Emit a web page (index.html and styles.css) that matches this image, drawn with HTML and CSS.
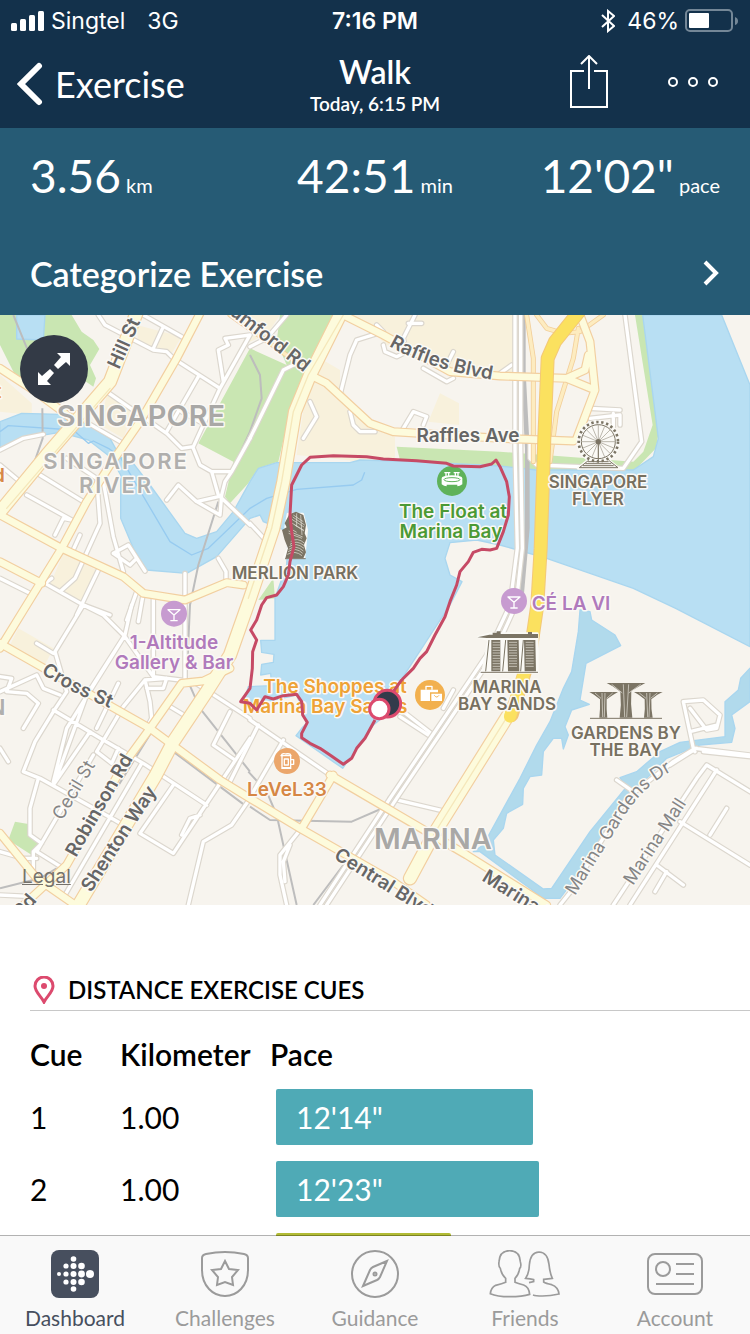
FILE: index.html
```html
<!DOCTYPE html>
<html lang="en">
<head>
  <meta charset="UTF-8">
  <meta name="viewport" content="width=device-width, initial-scale=1.0">
  <title>Walk</title>
  <link rel="stylesheet" href="styles.css">
</head>
<body>
  <header class="top">
    <div class="status">
      <div class="status-left">
        <svg class="signal" viewBox="0 0 34 20"><rect x="0" y="12" width="6" height="8" rx="1.5"/><rect x="9" y="8" width="6" height="12" rx="1.5"/><rect x="18" y="4" width="6" height="16" rx="1.5"/><rect x="27" y="0" width="6" height="20" rx="1.5"/></svg>
        <span>Singtel</span>
        <span class="network">3G</span>
      </div>
      <span class="time">7:16 PM</span>
      <div class="status-right">
        <svg class="bluetooth" viewBox="0 0 14 24"><path d="M1 6l12 11-6 5V2l6 5L1 18"/></svg>
        <span>46%</span>
        <svg class="battery" viewBox="0 0 54 24"><rect x="1" y="1" width="46" height="21" rx="4" class="shell"/><path d="M50 8q3 1 3 4t-3 4z" class="cap"/><rect x="4" y="4" width="20" height="15" rx="1" class="level"/></svg>
      </div>
    </div>
    <div class="nav">
      <button class="back">
        <svg viewBox="0 0 26 44"><path d="M22 4L4 22l18 18"/></svg>
        <span>Exercise</span>
      </button>
      <div class="title">
        <h1>Walk</h1>
        <p>Today, 6:15 PM</p>
      </div>
      <div class="actions">
        <button aria-label="Share">
          <svg class="share" viewBox="0 0 40 54"><path d="M15 16H2v36h36V16H25M20 34V2M12 9l8-8 8 8"/></svg>
        </button>
        <button aria-label="More">
          <svg class="more" viewBox="0 0 52 12"><circle cx="6" cy="6" r="4"/><circle cx="26" cy="6" r="4"/><circle cx="46" cy="6" r="4"/></svg>
        </button>
      </div>
    </div>
  </header>

  <main>
    <section class="summary">
      <div class="stats">
        <p><strong>3.56</strong> km</p>
        <p><strong>42:51</strong> min</p>
        <p><strong>12'02"</strong> pace</p>
      </div>
      <button class="categorize">
        <span>Categorize Exercise</span>
        <svg viewBox="0 0 18 28"><path d="M3 3l11 11L3 25"/></svg>
      </button>
    </section>

    <section class="map">
      <svg class="map-canvas" viewBox="0 0 750 590">
        <defs>
          <!-- small streets -->
          <g id="streets">
            <path d="M295 0L315 30 460 105 500 110 520 130 660 220 750 60M490 35L460 100M430 0L545 65M750 60L675 70 685 90 655 105 670 200M595 185L500 350M320 230L500 355 545 400 580 395 660 220M545 290L600 320M580 400L600 450 635 470 655 540 750 630M635 470H695L750 370M695 470L675 500 665 540 660 600 590 560 535 510 500 555M655 545L590 560"/>
            <path d="M0 405L70 370 130 358M265 325L360 380M80 540L215 615 190 610 165 660M120 480L250 560M200 430L290 490 300 625 225 790 180 830M310 500L340 665 370 770M340 715L385 690 435 768M340 715L390 750 410 730M0 450L60 500M240 660L215 715M0 790L90 835M155 790L135 805 250 870 330 900M295 765L230 900M410 830L380 915M430 835L415 920M460 840V1080M555 775V1090M655 730L678 770V800"/>
            <path d="M250 870L165 1010 200 1130 160 1190 105 1280 70 1370 120 1390 335 1510 370 1530M110 985L160 1015M250 870L310 900 375 965 460 1085 580 1100 750 1210M395 870L375 960 200 1240 160 1400M375 960L260 1140 165 1400M0 1130L110 1080 130 1120 180 1140M0 1085L35 1090 20 1130 80 1135 115 1165 70 1240M160 1185L310 1275 430 1345 620 1470M355 1105L290 1240M500 1090L435 1095 370 1175 290 1310 335 1345 355 1300M435 1095L450 1160 455 1210 440 1240M440 1120L490 1120 500 1090M510 1175L560 1205M270 1250L160 1410M115 1390L90 1480 90 1560 125 1585 100 1610 100 1680M280 1320L110 1610 190 1660M425 1345L195 1740M520 1410L420 1555 520 1615 750 1270M545 1560L570 1510 600 1500M750 1450L695 1530 610 1580 565 1770M690 1190L640 1290 705 1335M0 1300L25 1340M0 1740L100 1745M0 1610L70 1630 110 1630"/>
            <path d="M860 0L800 70 750 95M880 150L850 165 750 370M1020 240L1050 120 1070 75 1150 50 1130 30M1245 0L1210 70 1220 110 1190 125 1155 110 1150 90M1225 25H1265M1360 110L1340 150M1270 160L1340 200 1360 190M930 260L950 305 910 370M1050 290L1060 330 1080 350H1125M1210 340L1240 290 1280 305 1270 330M750 625L810 690"/>
            <path d="M1875 0L1925 380 1870 460 1610 450 1590 430 1590 385M1770 280L1860 285M1770 310L1860 300 1860 330M1840 295V335M1535 150L1500 175M750 1215L990 1380M775 1230L690 1400M850 1275L760 1430M900 1545L840 1620 840 1680 860 1770M870 1590L850 1640 855 1700M1200 1205L1300 1270M1210 1190L1300 1260M1360 1125L1330 1180M1340 1490L1170 1450"/>
            <path d="M2050 1160L2080 1300 2085 1310M2050 1160L2110 1155 2160 1200 2150 1240 2120 1245 2070 1180M2070 1250L2150 1230M2085 1300L2020 1340 1880 1450 1720 1720 1680 1770M2090 1300L2010 1350M1850 1395L1900 1430M2085 1300L2250 1320M2110 1310L2250 1325M2250 1430L2120 1350 2090 1390 1840 1770M2150 1365L1890 1770M2040 1520L2250 1650M2180 1480L2130 1560M1970 1650L2050 1710M2000 1670L1965 1730"/>
          </g>
          <!-- two lane streets beside the rail line -->
          <g id="lanes">
            <path d="M1545 0V400L1552 700 1530 870 1460 1020 1170 1450 960 1770"/>
            <path d="M1562 0V400L1567 700 1548 870 1480 1020 1190 1450 980 1770"/>
          </g>
          <g id="minor">
            <path d="M1580 0L1600 130V440M1735 40L1720 130 1670 290 1650 440M1610 0L1640 40 1690 55 1740 50 1810 0M690 0L930 170M1500 183L1350 165"/>
          </g>
          <g id="major">
            <path d="M0 160L100 225 215 310M600 -5L530 130 420 320 330 450 260 560 185 700 80 870 0 1000M0 600L185 700 370 785 430 835 555 855 680 803 730 810M0 740L125 805"/>
            <path d="M0 985L450 1240 660 1395 750 1450 900 1540 1180 1700 1280 1770M0 1555L110 1690 240 1780M690 1060L610 1098 545 1105 450 1240 370 1350 200 1650 60 1780M990 1380L1400 1620 1640 1770M1000 1380L905 1540"/>
            <path d="M1030 0L1150 60 1350 170 1500 183 1700 190 1785 225 1730 370M1740 0L1770 80 1785 225M1700 190L1755 165 1765 120M930 180L980 205 1110 325 1180 350 1500 370 1720 378"/>
          </g>
          <g id="trunk">
            <path d="M415 -20L330 200 235 310 140 420 0 590"/>
            <path d="M1030 -20L930 180 885 290 850 500 820 640 750 850 690 1020 620 1130 520 1280 465 1385 230 1780"/>
            <path d="M1550 1160L1300 1560 1230 1690"/>
          </g>
          <path id="raffles" d="M389 31Q430 55 500 66"/>
          <path id="cross" d="M41 358Q70 378 120 397"/>
          <path id="gardens" d="M575 581L625 500Q645 470 672 456"/>
        </defs>

        <g transform="scale(.33333)">
          <path class="land" d="M0 0H2250V1770H0z"/>
          <path class="sand" d="M1060 0H1540V170L1400 175 1160 90zM960 130L1020 165V215L1110 330 1185 365V430L1120 443 890 420 920 220zM1320 235L1377 265V330L1285 320zM410 30L545 65 515 115 415 90zM0 180L95 265V300L0 290zM320 240L400 290 370 370 300 330zM190 715L290 765 240 860 150 810zM55 940L160 1000 130 1060 20 1010zM750 0H840L800 60 750 80z"/>
          <path class="park" d="M0 0H215L245 50 280 75 298 102 270 150 288 190 280 215 200 160 100 180 50 190 0 90zM840 0H1000L925 170 870 290 835 440 775 460 745 505 690 565 675 545 700 440 595 385 750 100 860 150 830 80zM1190 395L1500 410 1900 440 1930 410 1958 330 1905 0H1940L1980 330 1968 400 1900 470 1500 460 1200 435zM45 1520L85 1527 88 1565 115 1585 95 1620 25 1575zM820 790L825 850 775 855z"/>
          <path class="water" d="M50 0H135L130 75 50 72zM0 320L65 295 180 298 255 325 330 370 360 425 400 445 450 510 555 655 590 670 650 650 700 590 750 500 775 460 830 443H1050L1080 435 1250 440 1500 453 1610 465H1900L1960 425 1975 370 1960 250 1928 0H2165L2250 210V995L2027 880 1900 820 1640 730 1500 690 1430 675 1350 683 1335 730 1350 780 1386 800 1350 870 1200 1100 1170 1190 1120 1230 1028 1360 888 1262 905 1240 920 1225 905 1180 890 1140 800 1160 765 1185 735 1150 745 1115 815 1112 812 1075 782 1080 785 1048 820 1042 822 1018 785 1012 782 976 825 976V850L860 750 865 650 790 620 780 600 750 610 650 725 560 775 440 765 400 700 362 610V480L330 425 265 375 180 352 70 370 0 410z"/>
          <path class="water canal" d="M1740 885L1770 890 1775 915 1845 960 1862 992 1758 1045 1740 1155 1768 1168 1715 1185 1695 1235 1705 1260 1690 1302 1685 1270 1660 1270 1630 1310 1625 1380 1590 1385 1570 1420 1568 1468 1520 1495 1510 1540 1480 1575 1485 1620 1630 1722 1655 1720 1770 1550 1880 1415 1860 1388 1910 1370 1980 1310 2040 1282 2175 1265V1160L2215 1125 2222 1090 2250 1060V1160L2195 1200 2205 1240 2195 1282 2100 1290 2000 1330 1900 1430 1800 1590 1680 1750H1630L1440 1610 1420 1610 1450 1590 1560 1390 1610 1290 1650 1220 1690 1120 1715 1070 1735 950z"/>
          <path class="current" d="M0 350L25 332 220 345 265 385 280 378 325 400 360 425 510 680 575 720 625 700 750 580 800 550 890 523 1060 510 1085 495 1094 472"/>
          <path class="rail" d="M40 0L85 110M127 280L128 370 100 450M750 350L690 480M655 560L595 750 570 870 560 1090 600 1180 750 1370M480 1210L350 1420M520 1310L740 1475M170 1660L120 1690 0 1720M745 1370L800 1430 830 1500 890 1770M750 1475L810 1515 1055 1520 1170 1470M1030 1650L940 1770M750 120L780 180 785 250 750 350"/>
          <path class="rail wide" d="M1570 0V170L1582 400V640L1562 870"/>

          <use href="#streets" class="street-edge"/>
          <use href="#streets" class="street"/>
          <use href="#lanes" class="street-edge"/>
          <use href="#lanes" class="street"/>
          <use href="#minor" class="minor-edge"/>
          <use href="#minor" class="minor"/>
          <use href="#major" class="major-edge"/>
          <use href="#trunk" class="trunk-edge"/>
          <use href="#major" class="major"/>
          <use href="#trunk" class="trunk"/>
          <path class="median" d="M1030 0L925 180 880 290 845 500 815 640 745 850M1550 1160L1300 1560M330 220L20 580"/>
          <path class="highway-edge" d="M1745 -20L1665 80 1643 130 1633 370 1622 700 1612 870 1590 1020 1535 1200"/>
          <path class="highway" d="M1745 -20L1665 80 1643 130 1633 370 1622 700 1612 870 1590 1020 1530 1205"/>

          <!-- merlion -->
          <g class="landmark">
            <path class="halo" d="M864 597h44l12 48-8 82H852l18-40-13-50z"/>
            <path class="fill" d="M868 598l20-8 22 10 8 30-4 25 6 15-8 20 6 22-8 18h-54l8-30-10-25-8-30 14-8-6-12z"/>
            <path class="hatch" d="M880 600l30 20M874 612l38 24M884 630l28 18M870 640l20 12M866 655l40 15M872 680q20-15 42 5M868 695q20-15 44 5M864 710q24-15 44 5M890 595v40M902 600l4 60M878 606l36 24M872 622l40 24M866 648l42 18M870 688q20-15 44 5M866 703q22-15 44 5M862 718q24-13 44 4"/>
            <path class="line" d="M855 731h62"/>
          </g>
          <!-- flyer -->
          <g class="landmark">
            <circle class="halo-ring" cx="1795" cy="380" r="58"/>
            <path class="halo" d="M1768 432h54l34 28h-122z"/>
            <circle class="cabins" cx="1795" cy="380" r="59"/>
            <circle class="line" cx="1795" cy="380" r="51"/>
            <path class="spokes" d="M1795 330v100M1745 380h100M1760 345l70 70M1830 345l-70 70M1776 334l38 92M1814 334l-38 92M1749 361l92 38M1749 399l92-38"/>
            <circle class="fill" cx="1795" cy="380" r="8"/>
            <path class="line" d="M1795 380v58M1764 440h62M1756 446h78M1749 452h92M1738 458h116M1766 436l-28 22M1826 436l28 22"/>
          </g>
          <!-- marina bay sands -->
          <g class="landmark">
            <path class="halo" d="M1436 966l34-10h142v116h-164l18-98z"/>
            <path class="fill" d="M1432 967l36-8h10v-6h12v-4h12v8h82v-6h12v6h18v12h-154z"/>
            <path class="fill" d="M1474 975h27v94h-27zM1522 975h34l2 94h-34zM1572 975h34l2 94h-34z"/>
            <path class="line" d="M1467 975l-10 94M1517 975l-9 94M1570 975l-8 94M1442 1072h172"/>
            <path class="stripe" d="M1478 982h22M1478 990h22M1478 998h22M1478 1006h22M1478 1014h22M1478 1022h22M1478 1030h22M1478 1038h22M1478 1046h22M1478 1054h22M1478 1062h22M1527 982h24M1527 990h24M1527 998h24M1527 1006h24M1527 1014h24M1527 1022h24M1527 1030h24M1527 1038h24M1527 1046h24M1527 1054h24M1577 982h24M1577 990h24M1577 998h24M1577 1006h24M1577 1014h24M1577 1022h24M1577 1030h24M1577 1038h24M1577 1046h24M1577 1054h24"/>
          </g>
          <!-- supertrees -->
          <g class="landmark">
            <path class="fill" d="M1820 1104h116l-18 10-24 14q-3 40 3 80h-38q6-40 2-78l-23-16zM1768 1131h86l-14 8-20 14q-1 30 2 55h-24q3-25 2-55l-18-14zM1902 1131h86l-16 8-18 14q-1 30 4 55h-26q4-25 2-55l-18-14z"/>
            <path class="stripe" d="M1870 1108l4 98M1886 1108l-6 98M1835 1108l32 26M1922 1108l-36 26M1806 1134l2 72M1815 1134l-2 72M1940 1134l3 72M1950 1134l-3 72M1785 1134l18 16M1838 1134l-18 16M1918 1134l20 16M1972 1134l-20 16"/>
            <path class="line" d="M1770 1210h216"/>
          </g>
        </g>

        <g class="label">
          <text class="area" x="141" y="111">SINGAPORE</text>
          <text class="area" x="433" y="534">MARINA</text>
          <text class="district" x="116" y="154">SINGAPORE</text>
          <text class="district" x="116" y="178">RIVER</text>
          <text class="road" x="119" y="55" text-anchor="start" transform="rotate(-66 119 55)">Hill St</text>
          <text class="road" x="229" y="-1" text-anchor="start" transform="rotate(38 229 -1)">umford Rd</text>
          <text class="road"><textPath href="#raffles">Raffles Blvd</textPath></text>
          <text class="road" x="468" y="127">Raffles Ave</text>
          <text class="road"><textPath href="#cross">Cross St</textPath></text>
          <text class="road thin" x="62" y="506" text-anchor="start" transform="rotate(-59 62 506)">Cecil St</text>
          <text class="road" x="76" y="543" text-anchor="start" transform="rotate(-60 76 543)">Robinson Rd</text>
          <text class="road" x="91" y="578" text-anchor="start" transform="rotate(-57 91 578)">Shenton Way</text>
          <text class="road" x="22" y="604" text-anchor="start" transform="rotate(-50 22 604)">Rd</text>
          <text class="road" x="333" y="543" text-anchor="start" transform="rotate(32 333 543)">Central Blvd</text>
          <text class="road" x="481" y="565" text-anchor="start" transform="rotate(32 481 565)">Marina B</text>
          <text class="road thin"><textPath href="#gardens">Marina Gardens Dr</textPath></text>
          <text class="road thin" x="633" y="571" text-anchor="start" transform="rotate(-57 633 571)">Marina Mall</text>
          <text class="place" x="295" y="264">MERLION PARK</text>
          <text class="place" x="598" y="173">SINGAPORE</text>
          <text class="place" x="598" y="190">FLYER</text>
          <text class="place" x="507" y="378">MARINA</text>
          <text class="place" x="507" y="395">BAY SANDS</text>
          <text class="place" x="626" y="424">GARDENS BY</text>
          <text class="place" x="626" y="441">THE BAY</text>
          <text class="poi green" x="453" y="203">The Float at</text>
          <text class="poi green" x="451" y="223">Marina Bay</text>
          <text class="poi purple" x="571" y="295">CÉ LA VI</text>
          <text class="poi purple" x="174" y="334">1-Altitude</text>
          <text class="poi purple" x="174" y="354">Gallery &amp; Bar</text>
          <text class="poi amber" x="335" y="378">The Shoppes at</text>
          <text class="poi amber" x="325" y="398">Marina Bay Sands</text>
          <text class="poi orange" x="287" y="481">LeVeL33</text>
          <text class="poi orange" x="-1" y="167">d</text>
          <text class="poi amber" x="-2" y="83">t</text>
          <text class="district" x="-2" y="400">N</text>
        </g>

        <g transform="scale(.33333)">
          <g class="pin">
            <circle cx="1356" cy="498" r="45" fill="#5fb25a"/>
            <path class="glyph" d="M1325 490q0-8 31-9 31 1 31 9v18q-8 6-15 6v-5h-32v5q-8 0-15-6z"/>
            <path class="glyph-line" d="M1333 473h18M1361 473h18M1338 473v10M1346 473v10M1366 473v10M1374 473v10"/>
            <ellipse cx="1356" cy="494" rx="24" ry="6" fill="none" stroke="#5fb25a" stroke-width="3"/>
            <circle cx="522" cy="896" r="39" fill="#c79bd0"/>
            <path class="glyph-line" d="M504 884h36l-18 16zM522 900v17M511 917h22"/>
            <circle cx="1542" cy="858" r="39" fill="#c79bd0"/>
            <path class="glyph-line" d="M1524 846h36l-18 16zM1542 862v17M1531 879h22"/>
            <circle cx="1290" cy="1140" r="45" fill="#f2b04e"/>
            <path class="glyph" d="M1262 1124h52v8h-24v26h-28zM1294 1136h32v22h-32z"/>
            <path class="glyph-line" d="M1278 1124v-10h18v10"/>
            <path d="M1303 1141q7 10 14 0" fill="none" stroke="#f2b04e" stroke-width="3"/>
            <circle cx="861" cy="1338" r="39" fill="#eba66b"/>
            <path class="glyph-line" d="M846 1324v34h26v-34M872 1334h9v14h-9M844 1360h30M843 1322q4-9 14-5 14-3 16 5zM853 1332h12v18h-12z"/>
          </g>
          <path class="route" d="M1125 1215L1095 1270 1070 1300 1055 1330 1030 1348 990 1320 960 1300 930 1285 905 1268 905 1255 922 1222 908 1200 905 1160 890 1138 850 1142 820 1152 795 1145 770 1185 750 1165 722 1160 750 1120 757 1060 758 1010 770 975 752 945 770 915 785 870 800 848 830 840 850 815 865 780 870 740 882 695 875 650 870 600 875 510 905 450 930 427 1000 422 1100 425 1150 432 1250 437 1340 445 1360 453 1440 455 1475 447 1488 435 1500 455 1520 500 1528 545 1525 600 1510 650 1490 700 1470 705 1445 703 1420 712 1405 740 1380 770 1370 810 1350 860 1340 890 1335 905 1305 960 1280 1010 1260 1030 1240 1060 1205 1095 1180 1130 1165 1150"/>
          <circle class="finish" cx="1162" cy="1166" r="40"/>
          <circle class="start" cx="1138" cy="1182" r="29"/>
        </g>
      </svg>
      <button class="expand" aria-label="Expand map">
        <svg viewBox="0 0 34 34"><path d="M20 1h13v13l-4-4-8 7-4-4 7-8zM14 33H1V20l4 4 8-7 4 4-7 8z"/></svg>
      </button>
      <a class="legal" href="#">Legal</a>
    </section>

    <section class="cues">
      <h2>
        <svg viewBox="0 0 22 28"><path d="M11 26C8 20 2 16 2 10a9 9 0 0 1 18 0c0 6-6 10-9 16z"/><circle cx="11" cy="10" r="3"/></svg>
        DISTANCE EXERCISE CUES
      </h2>
      <table>
        <thead>
          <tr><th class="col-cue">Cue</th><th class="col-km">Kilometer</th><th>Pace</th></tr>
        </thead>
        <tbody>
          <tr><td>1</td><td>1.00</td><td class="pace"><div class="bar" style="width: 57.9%">12'14"</div></td></tr>
          <tr><td>2</td><td>1.00</td><td class="pace"><div class="bar" style="width: 59.2%">12'23"</div></td></tr>
          <tr><td></td><td></td><td class="pace"><div class="bar fast" style="width: 39.4%"></div></td></tr>
        </tbody>
      </table>
    </section>
  </main>

  <nav class="tabs">
    <a href="#" class="active">
      <svg viewBox="0 0 48 48"><rect width="48" height="48" rx="8" fill="#474f5e"/><g fill="#fff"><circle cx="8" cy="24" r="2"/><circle cx="15" cy="16" r="2.6"/><circle cx="15" cy="24" r="2.6"/><circle cx="15" cy="32" r="2.6"/><circle cx="22.500" cy="9" r="2.800"/><circle cx="22.500" cy="16" r="3"/><circle cx="22.500" cy="24" r="3"/><circle cx="22.500" cy="32" r="3"/><circle cx="22.500" cy="39" r="2.800"/><circle cx="30.500" cy="16" r="3.300"/><circle cx="30.500" cy="24" r="3.400"/><circle cx="30.500" cy="32" r="3.300"/><circle cx="39" cy="24" r="4"/></g></svg>
      <span>Dashboard</span>
    </a>
    <a href="#">
      <svg viewBox="0 0 48 48"><path d="M1 8Q1 5 5 4 24 0 43 4q4 1 4 4v12c0 16-11 26-23 26S1 36 1 20zM24 11l4 8 9 1-6 7 1 8-8-3-8 3 1-8-6-7 9-1z"/></svg>
      <span>Challenges</span>
    </a>
    <a href="#">
      <svg viewBox="0 0 48 48"><circle cx="24" cy="24" r="23"/><path d="M12 36l7-16q1-2 3-3l14-6-7 16q-1 2-3 3z"/><circle cx="24" cy="24" r="1.500"/></svg>
      <span>Guidance</span>
    </a>
    <a href="#">
      <svg class="friends" viewBox="340 60 216 144"><path d="M390 157v-12q-12-10-16-30-6-4-4-20 2-33 32-33t32 33q4 16-2 20-3 20-14 30v12q8 4 26 8 16 6 18 28-22 7-60 7t-58-9q2-18 16-25 20-5 30-9zM460 158l14-3v-6q-10-3-24-4 10-14 11-40 3-38 29-39 26 1 30 37 3 28 10 42-12 2-26 3v8q6 4 24 8 20 7 22 28-26 6-50 6-20 0-28-3"/></svg>
      <span>Friends</span>
    </a>
    <a href="#">
      <svg class="account" viewBox="0 0 56 48"><rect x="1" y="4" width="54" height="40" rx="7"/><circle cx="16" cy="19" r="7"/><path d="M29 14h18M29 24h18M9 34h38"/></svg>
      <span>Account</span>
    </a>
  </nav>
</body>
</html>
```
FILE: styles.css
```css
:root {
  --navy: #13314b;
  --teal: #265b75;
  --bar: #4faab6;
  --pink: #dc4a6e;
  --gray: #9b9b9b;
}

* {
  margin: 0;
  padding: 0;
  box-sizing: border-box;
}

body {
  display: flex;
  flex-direction: column;
  height: 100vh;
  font-family: Lato, "Open Sans", sans-serif;
  background: #fff;
  color: #000;
}

button {
  background: none;
  border: none;
  color: inherit;
  font: inherit;
  cursor: pointer;
}

a {
  color: inherit;
  text-decoration: none;
}

svg {
  display: block;
  flex: none;
}

/* Status bar and navigation */
.top {
  background: var(--navy);
  color: #fff;
}

.status {
  display: grid;
  grid-template-columns: 1fr auto 1fr;
  align-items: center;
  height: 40px;
  padding: 2px 11px 0;
  font-family: Inter, sans-serif;
  font-size: 23px;
}

.status-left,
.status-right {
  display: flex;
  align-items: center;
  gap: 6px;
}

.status-right {
  justify-content: flex-end;
}

.network {
  margin-left: 16px;
}

.time {
  font-weight: 600;
}

.signal {
  width: 34px;
  height: 20px;
  fill: #fff;
}

.bluetooth {
  width: 14px;
  height: 24px;
  margin-right: 6px;
  fill: none;
  stroke: #fff;
  stroke-width: 2;
}

.battery {
  width: 54px;
  height: 24px;
}

.shell {
  fill: none;
  stroke: #748797;
  stroke-width: 2;
}

.cap {
  fill: #748797;
}

.level {
  fill: #fff;
}

.nav {
  display: grid;
  grid-template-columns: 1fr auto 1fr;
  align-items: center;
  height: 88px;
  padding: 0 17px;
}

.back {
  display: flex;
  align-items: center;
  gap: 12px;
  font-size: 36px;
}

.back svg {
  width: 26px;
  height: 44px;
  fill: none;
  stroke: #fff;
  stroke-width: 6;
  stroke-linecap: round;
}

.title {
  text-align: center;
}

.title h1 {
  font-size: 32px;
  line-height: 40px;
  font-weight: 600;
}

.title p {
  font-size: 19px;
  line-height: 24px;
  font-weight: 600;
}

.actions {
  display: flex;
  justify-content: flex-end;
  align-items: center;
  gap: 58px;
  padding: 0 14px 4px 0;
}

.share,
.more {
  fill: none;
  stroke: #fff;
  stroke-width: 2;
}

.share {
  width: 40px;
  height: 54px;
}

.more {
  width: 52px;
  height: 12px;
}

/* Summary */
main {
  flex: 1;
  min-height: 0;
  overflow-y: auto;
  scrollbar-width: none;
}

.summary {
  background: var(--teal);
  color: #fff;
  padding: 16px 30px 10px;
}

.stats {
  display: grid;
  grid-template-columns: 1fr auto 1fr;
  font-size: 20px;
  line-height: 64px;
}

.stats p:last-child {
  text-align: right;
}

.stats strong {
  font-size: 46px;
  font-weight: 400;
}

.categorize {
  display: flex;
  justify-content: space-between;
  align-items: center;
  width: 100%;
  height: 72px;
  margin-top: 26px;
  font-size: 34px;
  font-weight: 600;
}

.summary .categorize {
  height: 64px;
  margin-top: 24px;
}

.categorize svg {
  width: 18px;
  height: 28px;
  fill: none;
  stroke: #fff;
  stroke-width: 4;
}

/* Map */
.map {
  position: relative;
}

.map-canvas {
  width: 100%;
  height: auto;
  overflow: hidden;
}

.map-canvas path {
  stroke-linejoin: round;
}

.land { fill: #f7f4ee; }
.sand { fill: #f8f1dc; }
.park { fill: #c9e6b2; }
.water { fill: #b8dff3; stroke: #a9d6ef; stroke-width: 4; }
.canal { fill: #b1daec; }
.current { fill: none; stroke: #97cbf0; stroke-width: 4; }
.rail { fill: none; stroke: #bdbdbd; stroke-width: 6; }
.wide { stroke-width: 14; }

.street, .street-edge, .minor, .minor-edge, .major, .major-edge,
.trunk, .trunk-edge, .median, .highway, .highway-edge {
  fill: none;
  stroke-linecap: round;
}

.street-edge { stroke: #dcd7ce; stroke-width: 17; }
.street { stroke: #fff; stroke-width: 10; }
.minor-edge { stroke: #f2cf9a; stroke-width: 15; }
.minor { stroke: #fdecc0; stroke-width: 10; }
.major-edge { stroke: #f2cfa0; stroke-width: 27; }
.major { stroke: #fdfbdc; stroke-width: 20; }
.trunk-edge { stroke: #f2cfa0; stroke-width: 43; }
.trunk { stroke: #fdfbdc; stroke-width: 36; }
.median { stroke: #f5e7ba; stroke-width: 4; }
.highway-edge { stroke: #f3c878; stroke-width: 42; }
.highway { stroke: #fbe15f; stroke-width: 36; }

.landmark .halo { fill: #fbfaf6; stroke: #fbfaf6; stroke-width: 8; }
.landmark .halo-ring { fill: #fbfaf6; stroke: #fbfaf6; stroke-width: 16; }
.landmark .fill { fill: #7b7464; }
.landmark .line { fill: none; stroke: #7b7464; stroke-width: 3; }
.landmark .spokes { stroke: #9b9588; stroke-width: 2; }
.landmark .cabins { fill: none; stroke: #7b7464; stroke-width: 8; stroke-dasharray: 7 8; }
.landmark .hatch,
.landmark .stripe { fill: none; stroke: #e8e5dc; stroke-width: 2; }

.label {
  font-family: Inter, sans-serif;
  font-weight: 600;
  text-anchor: middle;
}

.label text {
  paint-order: stroke;
  stroke: #fbf9f5;
  stroke-width: 3px;
  stroke-linejoin: round;
}

.label .area { font-size: 29px; fill: #a9a8a6; }
.label .district { font-size: 22px; fill: #b0afad; letter-spacing: 2px; }
.label .road { font-size: 19px; fill: #666; }
.label .thin { font-size: 18px; font-weight: 400; fill: #858585; }
.label .place { font-size: 17px; fill: #777060; }
.label .poi { font-size: 19px; }
.label .green { fill: #4c9a35; }
.label .purple { fill: #b07abc; }
.label .amber { fill: #eea236; }
.label .orange { fill: #d68745; }
.label text:has(textPath),
.label text[text-anchor="start"] { text-anchor: start; }

.pin .glyph { fill: #fff; }
.pin .glyph-line { fill: none; stroke: #fff; stroke-width: 4; }

.route { fill: none; stroke: #c64a65; stroke-width: 9; }
.finish { fill: #333b4b; stroke: var(--pink); stroke-width: 9; }
.start { fill: #fff; stroke: var(--pink); stroke-width: 9; }

.expand {
  position: absolute;
  top: 20px;
  left: 20px;
  display: grid;
  place-items: center;
  width: 68px;
  height: 68px;
  border-radius: 50%;
  background: #333a46;
}

.expand svg {
  width: 34px;
  height: 34px;
  fill: #fff;
}

.legal {
  position: absolute;
  left: 22px;
  bottom: 16px;
  font-family: Inter, sans-serif;
  font-size: 19px;
  line-height: 24px;
  color: #75726c;
  text-decoration: underline;
}

/* Cues */
.cues {
  padding: 64px 0 0 30px;
}

.cues h2 {
  display: flex;
  align-items: center;
  gap: 13px;
  height: 42px;
  padding-left: 3px;
  border-bottom: 1px solid #c8c8c8;
  font-size: 24px;
  font-weight: 600;
}

.cues h2 svg {
  width: 22px;
  height: 28px;
  fill: none;
  stroke: var(--pink);
  stroke-width: 3;
}

.cues h2 circle {
  fill: var(--pink);
  stroke: none;
}

table {
  width: 100%;
  border-collapse: collapse;
  table-layout: fixed;
}

th {
  height: 70px;
  padding-top: 16px;
  text-align: left;
  font-size: 30px;
  line-height: 36px;
  font-weight: 600;
}

.col-cue {
  width: 90px;
}

.col-km {
  width: 150px;
}

td {
  height: 72px;
  font-size: 30px;
}

.pace {
  padding: 0 30px 0 6px;
}

.bar {
  height: 56px;
  padding-left: 20px;
  border-radius: 2px;
  background: var(--bar);
  color: #fff;
  line-height: 56px;
}

.fast {
  background: #b2bc35;
}

/* Tab bar */
.tabs {
  display: grid;
  grid-template-columns: repeat(5, 1fr);
  flex: none;
  position: relative;
  height: 99px;
  margin-top: -1px;
  padding-top: 14px;
  background: #f9f9f9;
  background-clip: padding-box;
  border-top: 1px solid rgba(0, 0, 0, 0.3);
  color: var(--gray);
}

.tabs a {
  display: flex;
  flex-direction: column;
  align-items: center;
  gap: 8px;
  font-size: 21px;
  line-height: 24px;
}

.tabs svg {
  width: 48px;
  height: 48px;
  fill: none;
  stroke: currentColor;
  stroke-width: 2;
}

.tabs .friends {
  width: 72px;
  stroke-width: 5;
}

.tabs .account {
  width: 56px;
}

.tabs .active {
  color: #474f5e;
}

.tabs .active svg {
  stroke: none;
}
```
